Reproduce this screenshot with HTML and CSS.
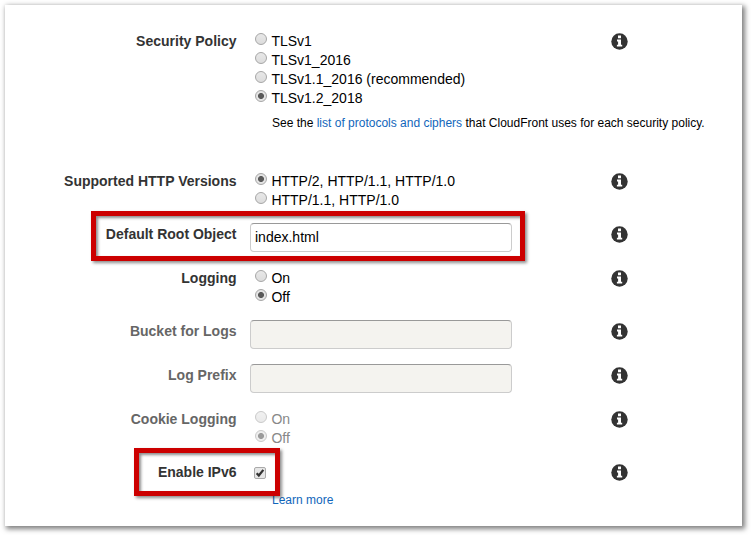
FILE: index.html
```html
<!DOCTYPE html>
<html lang="en">
<head>
<meta charset="utf-8">
<title>Distribution Settings</title>
<link rel="stylesheet" href="styles.css">
</head>
<body>
<svg width="0" height="0" class="defs" aria-hidden="true">
  <symbol id="info" viewBox="0 0 17 17">
    <circle cx="8.5" cy="8.5" r="8.2" fill="#333"/>
    <path fill="#fff" d="M7 2.6h3v2.6H7zM6 6.6h4v5.1h1.2v1.9H5.9v-1.9h1.2V8.4H6z"/>
  </symbol>
</svg>
<main class="card">
  <section class="row tall">
    <div class="label">Security Policy</div>
    <div class="control">
      <div class="option"><i class="radio"></i><span>TLSv1</span></div>
      <div class="option"><i class="radio"></i><span>TLSv1_2016</span></div>
      <div class="option"><i class="radio"></i><span>TLSv1.1_2016 (recommended)</span></div>
      <div class="option"><i class="radio on"></i><span>TLSv1.2_2018</span></div>
      <p class="note">See the <a>list of protocols and ciphers</a> that CloudFront uses for each security policy.</p>
    </div>
    <svg class="info"><use href="#info"/></svg>
  </section>
  <section class="row double">
    <div class="label">Supported HTTP Versions</div>
    <div class="control">
      <div class="option"><i class="radio on"></i><span>HTTP/2, HTTP/1.1, HTTP/1.0</span></div>
      <div class="option"><i class="radio"></i><span>HTTP/1.1, HTTP/1.0</span></div>
    </div>
    <svg class="info"><use href="#info"/></svg>
  </section>
  <section class="row">
    <div class="label">Default Root Object<div class="mark mark-root"></div></div>
    <div class="control"><div class="field">index.html</div></div>
    <svg class="info"><use href="#info"/></svg>
  </section>
  <section class="row double">
    <div class="label">Logging</div>
    <div class="control">
      <div class="option"><i class="radio"></i><span>On</span></div>
      <div class="option"><i class="radio on"></i><span>Off</span></div>
    </div>
    <svg class="info"><use href="#info"/></svg>
  </section>
  <section class="row">
    <div class="label muted">Bucket for Logs</div>
    <div class="control"><div class="field disabled"></div></div>
    <svg class="info"><use href="#info"/></svg>
  </section>
  <section class="row">
    <div class="label muted">Log Prefix</div>
    <div class="control"><div class="field disabled"></div></div>
    <svg class="info"><use href="#info"/></svg>
  </section>
  <section class="row double">
    <div class="label muted">Cookie Logging</div>
    <div class="control off">
      <div class="option"><i class="radio"></i><span>On</span></div>
      <div class="option"><i class="radio on"></i><span>Off</span></div>
    </div>
    <svg class="info"><use href="#info"/></svg>
  </section>
  <section class="row double">
    <div class="label">Enable IPv6<div class="mark mark-ipv6"></div></div>
    <div class="control">
      <svg class="check" viewBox="0 0 12 12"><path d="M2 6.2 4.6 9 10 2.2" fill="none" stroke="#333" stroke-width="2.7"/></svg>
      <p class="note more"><a>Learn more</a></p>
    </div>
    <svg class="info"><use href="#info"/></svg>
  </section>
</main>
</body>
</html>
```

FILE: styles.css
```css
* { box-sizing: border-box; }
body {
  margin: 0;
  padding: 5px;
  height: 535px;
  overflow: hidden;
  background: #fff;
  font-family: "Liberation Sans", Arial, sans-serif;
  font-size: 14px;
  line-height: 19px;
  color: #000;
}
.defs { position: absolute; }
.card {
  width: 737px;
  height: 521px;
  padding-top: 27px;
  background: #fff;
  box-shadow: 2px 2px 5px 1px rgba(0, 0, 0, 0.5);
}
.row {
  display: grid;
  grid-template-columns: 231px 375px 17px;
  height: 44px;
}
.row.double { height: 53px; }
.row.tall { height: 140px; }
.label {
  position: relative;
  left: 0.5px;
  text-align: right;
  font-weight: bold;
  color: #333;
  white-space: nowrap;
}
.label.muted { color: #666; }
.control { padding-left: 14px; }
.option {
  display: flex;
  height: 19px;
  padding-left: 5px;
  white-space: nowrap;
}
.radio {
  width: 12px;
  height: 12px;
  margin: 1px 4.4px 0 0;
  border: 1px solid #a6a6a6;
  border-radius: 50%;
  background: linear-gradient(#e8e8e8, #dcdcdc);
}
.radio.on {
  background: radial-gradient(circle, #5a5a5a 2.6px, #e4e4e4 3.4px);
}
.off { color: #888; }
.off .radio { opacity: 0.6; }
.note {
  margin: 6px 0 0 22px;
  font-size: 12px;
  line-height: 18px;
  white-space: nowrap;
}
a { color: #1166bb; }
.field {
  width: 262px;
  height: 29px;
  margin-top: -2px;
  padding: 0 4px;
  border: 1px solid #ccc;
  border-top-color: #999;
  border-radius: 4px;
  line-height: 27px;
}
.field.disabled { background: #f4f3ef; }
.info { width: 17px; height: 17px; margin-top: 1px; }
.check {
  display: block;
  width: 12px;
  height: 12px;
  margin: 4px 0 0 4px;
  border: 1px solid #aaa;
  border-radius: 2px;
  background: #e6e6e6;
}
.note.more { margin-top: 12px; }
.mark {
  position: absolute;
  z-index: 1;
  border: 5px solid #c00;
  box-shadow: 2px 2px 3px rgba(0, 0, 0, 0.45), inset 2px 2px 3px rgba(0, 0, 0, 0.45);
}
.mark-root { left: 85.5px; top: -14px; width: 434px; height: 50px; }
.mark-ipv6 { left: 128.5px; top: -15px; width: 146px; height: 48px; }
```
